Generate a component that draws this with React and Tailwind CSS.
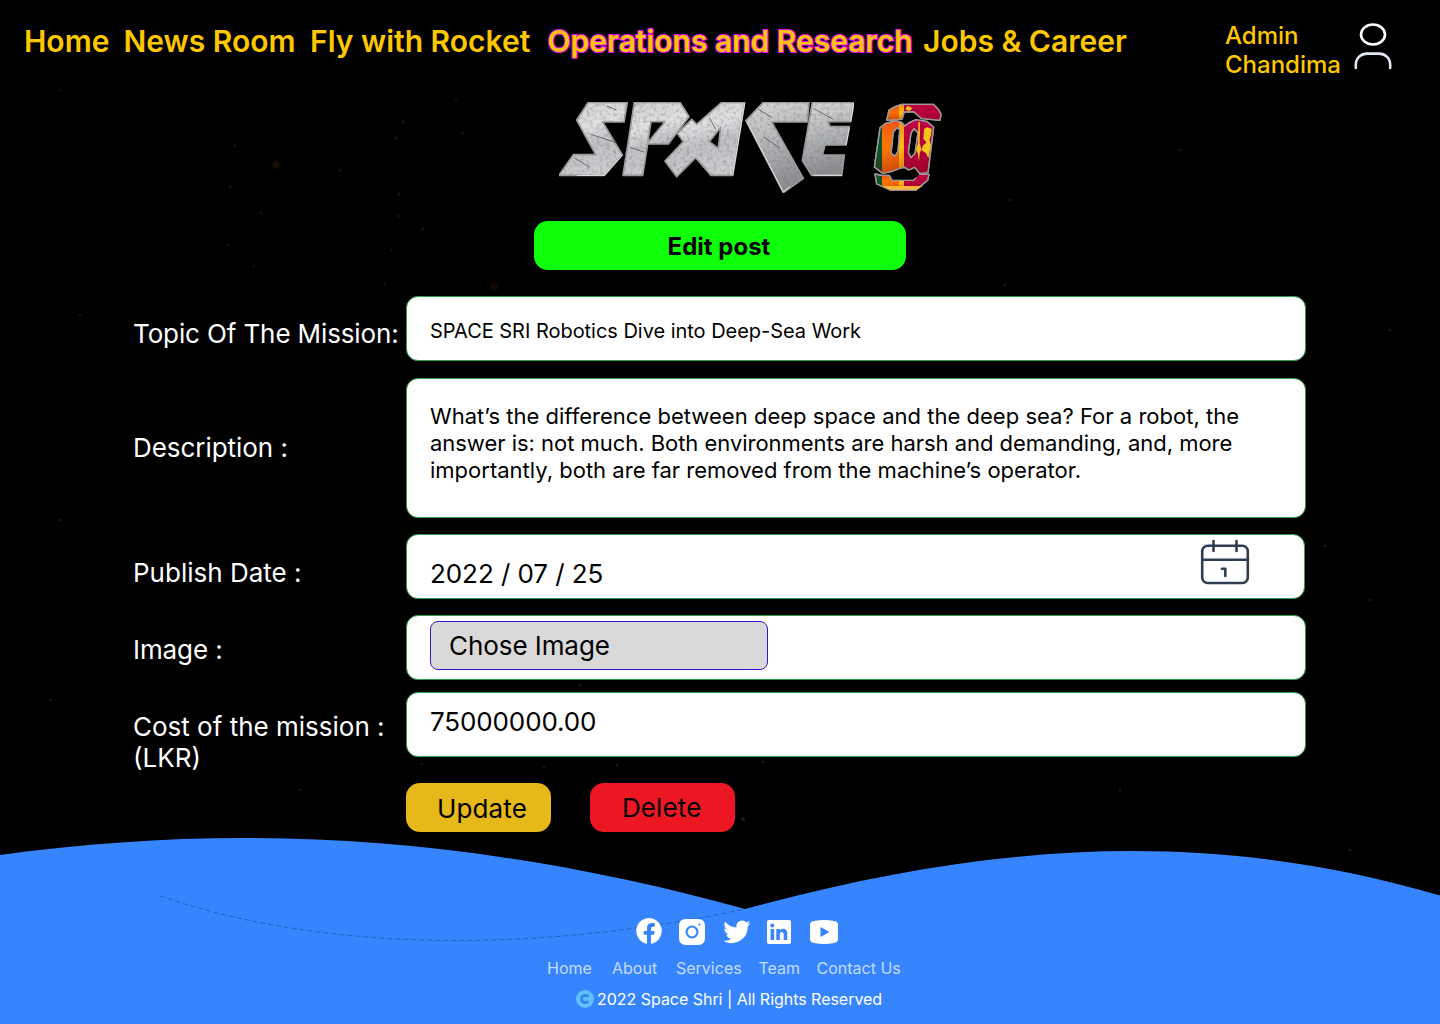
import React from "react";

const NAV = [
  { t: "Home", w: "w-[99.5px]" },
  { t: "News Room", w: "w-[186.5px]" },
  { t: "Fly with Rocket", w: "w-[237.5px]" },
  { t: "Operations and Research", w: "w-[375.5px]", active: true },
  { t: "Jobs & Career", w: "w-[302px]" },
];

const STARS = [
  [276, 165, 4, "#140705"], [276, 165, 2, "#1f100b"], [494, 287, 4, "#140806"], [235, 146, 1.5, "#0c1212"], [456, 99, 1.5, "#0f1414"],
  [403, 122, 1.8, "#14120c"], [396, 138, 1.8, "#14130d"], [463, 133, 1.5, "#121210"], [340, 170, 1.5, "#12120e"], [399, 194, 1.8, "#13130f"],
  [399, 216, 1.5, "#0d1414"], [423, 229, 1.8, "#131313"], [261, 213, 1.5, "#0e1210"], [230, 187, 1.5, "#0f110f"], [254, 266, 1.5, "#0f110f"],
  [208, 256, 1.3, "#14110a"], [228, 245, 1.3, "#101010"], [385, 284, 1.3, "#131010"], [391, 250, 1.3, "#101010"],
  [60, 90, 1.2, "#121212"], [1010, 200, 1.5, "#1a1512"], [80, 315, 1.5, "#181210"], [1005, 285, 1.5, "#191512"],
  [1180, 150, 1.5, "#15110f"], [60, 520, 1.5, "#151515"], [1390, 330, 1.5, "#1a1614"], [1370, 600, 1.5, "#151515"],
  [743, 819, 2, "#1b1f17"], [617, 765, 1.5, "#141c1c"], [422, 764, 1.5, "#121514"], [544, 767, 1.5, "#121514"], [580, 685, 1.5, "#151515"],
  [1120, 790, 1.5, "#161a14"], [300, 790, 1.5, "#131813"], [50, 700, 1.5, "#151515"], [1325, 546, 1.5, "#171717"],
  [763, 762, 1.5, "#151815"], [1350, 850, 1.5, "#151a14"],
];

function Backdrop() {
  return (
    <svg className="absolute inset-0" width="1440" height="1024">
      {STARS.map(([x, y, r, c]) => <circle key={x + "-" + y + "-" + r} cx={x} cy={y} r={r} fill={c} />)}
      <path d="M0 855 C230 824 465 832 745 909 C1000 839.5 1215 829.5 1440 895.5 V1024 H0 Z" fill="#3685ff" />
      <path d="M160 896 C310 948 520 957 745 909" fill="none" stroke="#1b4b96" strokeWidth=".6" strokeDasharray="5 3" />
    </svg>
  );
}

function Logo() {
  return (
    <svg className="block" width="400" height="110" viewBox="0 0 1200 330">
      <defs>
        <linearGradient id="steel" x1="0" y1="0" x2=".25" y2="1">
          <stop offset="0" stopColor="#cfcfcf" /><stop offset=".4" stopColor="#e0e1e3" />
          <stop offset=".65" stopColor="#bfc1c4" /><stop offset="1" stopColor="#cccdd0" />
        </linearGradient>
        <linearGradient id="steelDark" x1="0" y1="0" x2=".2" y2="1">
          <stop offset="0" stopColor="#dadada" /><stop offset=".5" stopColor="#b4b6b9" /><stop offset="1" stopColor="#8b8d91" />
        </linearGradient>
        <linearGradient id="flag" gradientUnits="userSpaceOnUse" x1="970" y1="0" x2="1175" y2="0">
          <stop offset=".12" stopColor="#07572c" />
          <stop offset=".12" stopColor="#ff7a08" /><stop offset=".38" stopColor="#ff6a00" />
          <stop offset=".38" stopColor="#ffc20f" /><stop offset=".45" stopColor="#ffb911" />
          <stop offset=".45" stopColor="#b8003f" />
        </linearGradient>
        <linearGradient id="shade" x1="0" y1="0" x2="0" y2="1">
          <stop offset="0" stopColor="#e80070" stopOpacity=".25" /><stop offset=".5" stopColor="#600" stopOpacity="0" />
          <stop offset="1" stopColor="#700000" stopOpacity=".35" />
        </linearGradient>
        <filter id="grain" x="0" y="0" width="100%" height="100%">
          <feTurbulence type="fractalNoise" baseFrequency=".1" numOctaves="3" seed="4" />
          <feColorMatrix values="0 0 0 0 .2  0 0 0 0 .2  0 0 0 0 .2  1.3 0 0 0 -.57" />
          <feComposite operator="in" in2="SourceGraphic" result="n" />
          <feMerge><feMergeNode in="SourceGraphic" /><feMergeNode in="n" /></feMerge>
        </filter>
      </defs>
      <g filter="url(#grain)" stroke="#a19b9c" strokeWidth="5" strokeLinejoin="round" fillRule="evenodd">
        <path fill="url(#steel)" d="M115 37H232L222 96H158L217 195L163 256H27L70 194H137L80 90Z" />
        <path fill="url(#steel)" d="M253 37H390L417 80L355 162H293L278 256H219ZM303 95H345L293 158Z" />
        <path fill="url(#steel)" d="M440 103L515 37H584L548 256H483L437 203L380 260L345 213L400 155L382 130L425 88ZM512 112L478 155L505 175Z" />
        <path fill="url(#steelDark)" d="M640 37H777L772 96H665L760 265L700 308L588 92Z" />
        <path fill="url(#steelDark)" d="M787 37H912L902 95H835L840 110H898L888 165H825L817 195H883L875 256H785L757 212Z" />
      </g>
      <g fill="none" stroke="#3c3c3e" strokeWidth="2">
        <path d="M122 133L200 158M75 205L120 232M240 172L282 186M478 83L497 118M200 60L170 48M625 58L665 82M790 55L850 88M640 140L690 175" />
      </g>
      <g fill="none" stroke="#e9e6e6" strokeWidth="3" strokeLinejoin="round">
        <path d="M217 195L163 256H80M548 256L584 40M590 94L700 306L720 290M875 256H790M898 112L888 165M902 95L911 40" />
      </g>
      <g stroke="#9d9896" strokeWidth="4" strokeLinejoin="round" fillRule="evenodd">
        {["url(#flag)", "url(#shade)"].map((f) => (
          <g key={f} fill={f}>
            <path d="M1035 50L1055 43H1150L1165 58L1173 72L1170 91L1115 86L1092 66H1063L1056 88L1010 91L1017 60Z" />
            <path d="M1005 101L1035 92L1055 97L1064 108L1078 98L1097 89L1130 94L1151 112L1145 160L1134 248L1110 251L1094 232L1076 240L1064 232L1052 234L1024 245L998 250L973 231L990 113ZM1042 112L1030 126L1023 190L1035 198L1044 185L1049 120ZM1092 116L1083 130L1075 188L1083 203L1095 190L1104 128Z" />
            <path d="M975 252L996 256H1018L1026 271H1092L1102 253L1137 253L1133 271L1098 300H1020L980 282Z" />
          </g>
        ))}
      </g>
      <path fill="#000" d="M1020 252L1052 240L1074 250L1094 240L1108 254L1090 268H1028Z" />
      <path fill="#f5c51c" d="M1105 97H1110L1109 160L1114 178L1109 190L1107 215L1103 190L1098 180L1104 160ZM1072 47L1088 55L1077 64L1066 58ZM1122 118L1130 112L1145 116L1143 136L1138 150L1143 165L1135 205L1128 190L1114 180L1120 165L1130 158L1120 146Z" />
      <path fill="#ffb63a" d="M998 288H1118L1098 299H1020Z" />
    </svg>
  );
}

function UserIcon() {
  return (
    <svg width="40" height="48" viewBox="0 0 40 48" fill="none" strokeWidth="2.6" strokeLinecap="round">
      <ellipse cx="20" cy="12.5" rx="12" ry="10" stroke="#fff" />
      <path d="M2.8 46V43C2.8 36 8 31.6 14 31.6H26C32 31.6 37.2 36 37.2 43V46" stroke="#e2e8f2" />
    </svg>
  );
}

function CalendarIcon() {
  return (
    <svg width="50" height="46" viewBox="0 0 50 46" fill="none" stroke="#2c3e50" strokeWidth="2.6" strokeLinecap="round" strokeLinejoin="round">
      <rect x="2.2" y="6.8" width="45.6" height="37.2" rx="5.5" />
      <path d="M2.2 20.8H48M13.5 2V12M36.5 2V12M22 29.8H25.3V37" />
    </svg>
  );
}

function Field({ label, className, labelClass, children }) {
  return (
    <div className={"flex " + className}>
      <div className={"w-[273px] shrink-0 whitespace-nowrap text-[26px] leading-[31px] text-white " + labelClass}>{label}</div>
      {children}
    </div>
  );
}

const BOX = "w-[900px] rounded-[12px] border border-[#2f9e4f] bg-white pl-[23px] text-black ";

const SOCIAL = [
  { n: "facebook", w: 26, c: "mr-[17px]", d: "M13 0A13 13 0 0 0 11 25.8V16.8H7.7V13H11V10.1C11 6.8 12.9 5 15.9 5C17.3 5 18.8 5.3 18.8 5.3V8.5H17.1C15.5 8.5 15 9.5 15 10.5V13H18.6L18 16.8H15V25.8A13 13 0 0 0 13 0Z" },
  { n: "instagram", w: 26, c: "mr-[18px]", d: "M7 1H19Q26 1 26 8V20Q26 27 19 27H7Q0 27 0 20V8Q0 1 7 1ZM13 7.5A6.5 6.5 0 1 0 13 20.5A6.5 6.5 0 0 0 13 7.5ZM13 9.6A4.4 4.4 0 1 1 13 18.4A4.4 4.4 0 0 1 13 9.6ZM20.5 4.7L21 6L22.3 6.5L21 7L20.5 8.3L20 7L18.7 6.5L20 6Z" },
  { n: "twitter", w: 28, c: "mr-[16px]", d: "M27.5 5.3A11 11 0 0 1 24.3 6.2A5.5 5.5 0 0 0 26.7 3.1A11 11 0 0 1 23.2 4.4A5.65 5.65 0 0 0 13.6 9.5A15.9 15.9 0 0 1 2.1 3.7A5.6 5.6 0 0 0 3.9 11.2A5.5 5.5 0 0 1 1.4 10.5A5.6 5.6 0 0 0 5.9 16.1A5.5 5.5 0 0 1 3.4 16.2A5.6 5.6 0 0 0 8.6 20.7A11.1 11.1 0 0 1 .4 22.7A16 16 0 0 0 24.7 8.2A11 11 0 0 0 27.5 5.3Z" },
  { n: "linkedin", w: 24, c: "mr-[19px]", d: "M2 2H22Q24 2 24 4V24Q24 26 22 26H2Q0 26 0 24V4Q0 2 2 2ZM3.6 11V22H7.1V11ZM5.3 5.6A2 2 0 1 0 5.3 9.6A2 2 0 0 0 5.3 5.6ZM9.3 11V22H12.8V16.5C12.8 13 16.7 13.3 16.7 16.5V22H20.3V15.5C20.3 10 15 9.5 12.8 12.6V11Z" },
  { n: "youtube", w: 28, c: "", d: "M4 3Q14 1.2 24 3Q28 3.3 28 7V21Q28 24.5 24 25Q14 26.8 4 25Q0 24.5 0 21V7Q0 3.3 4 3ZM10.5 9V19L19.5 14Z" },
];

const LINKS = [["Home", "w-[65px]"], ["About", "w-[64px]"], ["Services", "w-[82.5px]"], ["Team", "w-[58px]"], ["Contact Us", "w-[90px]"]];

export default function App() {
  return (
    <div className="relative h-[1024px] w-[1440px] overflow-hidden bg-black font-['Inter',sans-serif]">
      <Backdrop />
      <div className="relative flex flex-col">
        <header className="flex h-[90px] items-start pl-[24px]">
          <nav className="flex pt-[23px] text-[30px] font-semibold leading-[36px] text-[#ffc700]">
            {NAV.map((n) => (
              <a key={n.t} className={"block shrink-0 whitespace-nowrap " + n.w + (n.active ? " [-webkit-text-stroke:2px_#ff00ff] [paint-order:stroke_fill]" : "")}>{n.t}</a>
            ))}
          </nav>
          <div className="w-[128px] shrink-0 pt-[21px] text-[24px] font-medium leading-[29px] text-[#ffc700]">Admin<br />Chandima</div>
          <div className="pt-[22px]"><UserIcon /></div>
        </header>
        <div className="ml-[550px]"><Logo /></div>
        <h1 className="ml-[534px] mt-[21px] h-[49px] w-[372px] rounded-[14px] bg-[#0fff0b] pr-[2px] text-center text-[24px] font-bold leading-[51px] text-black">Edit post</h1>

        <main className="ml-[133px] mt-[26px]">
          <Field label="Topic Of The Mission:" className="h-[65px]" labelClass="pt-[22px] tracking-[-0.12px]">
            <div className={BOX + "pt-[22px] text-[20px] leading-[24px] tracking-[-0.03px]"}>SPACE SRI Robotics Dive into Deep-Sea Work</div>
          </Field>
          <Field label="Description :" className="mt-[17px] h-[140px]" labelClass="pt-[54px] tracking-[-0.05px]">
            <div className={BOX + "pt-[24px] text-[22px] leading-[27px]"}>
              <span className="tracking-[0.02px]">What’s the difference between deep space and the deep sea? For a robot, the</span><br />
              <span className="tracking-[-0.03px]">answer is: not much. Both environments are harsh and demanding, and, more</span><br />
              <span className="tracking-[0.01px]">importantly, both are far removed from the machine’s operator.</span>
            </div>
          </Field>
          <Field label="Publish Date :" className="mt-[16px] h-[65px]" labelClass="pt-[23px]">
            <div className={BOX + "flex max-w-[899px] justify-between pr-[54px] text-[26px] leading-[31px]"}>
              <span className="pt-[23px] tracking-[-0.07px]">2022 / 07 / 25</span>
              <span className="pt-[4px]"><CalendarIcon /></span>
            </div>
          </Field>
          <Field label="Image :" className="mt-[16px] h-[65px]" labelClass="pt-[19px] tracking-[-0.08px]">
            <div className={BOX + "pt-[5px]"}>
              <button className="block h-[49px] w-[338px] rounded-[8px] border border-[#3217d0] bg-[#d9d9d9] pl-[18px] text-left text-[26px] leading-[47px] tracking-[-0.07px]">Chose Image</button>
            </div>
          </Field>
          <Field label={<>Cost of the mission :<br />(LKR)</>} className="mt-[12px] h-[65px]" labelClass="pt-[19px]">
            <div className={BOX + "pt-[13px] text-[26px] leading-[31px] tracking-[-0.12px]"}>75000000.00</div>
          </Field>
          <div className="ml-[273px] mt-[26px] flex gap-[39px] text-[26px] text-black">
            <button className="h-[49px] w-[145px] rounded-[14px] bg-[#e6b81a] pl-[31px] text-left leading-[51px] tracking-[0.12px]">Update</button>
            <button className="h-[49px] w-[145px] rounded-[14px] bg-[#ec1723] pl-[32px] text-left leading-[49px] tracking-[0.1px]">Delete</button>
          </div>
        </main>

        <footer className="mt-[86px]">
          <div className="ml-[636px] flex">
            {SOCIAL.map((s) => (
              <svg key={s.n} className={"block " + s.c} width={s.w} height="28" fill="#fff" fillRule="evenodd"><path d={s.d} /></svg>
            ))}
          </div>
          <div className="ml-[547px] mt-[13px] flex text-[16px] leading-[19px] text-[#c4dbff]">
            {LINKS.map(([t, w]) => <a key={t} className={"block shrink-0 whitespace-nowrap " + w}>{t}</a>)}
          </div>
          <div className="ml-[576px] mt-[12px] flex items-center text-[16px] leading-[19px] text-white">
            <svg className="mr-[3px] block" width="18" height="19" viewBox="0 0 18 19"><circle cx="9" cy="9" r="9" fill="#5fc0ff" /><path d="M12.3 7A3.7 3.7 0 1 0 12.3 11" fill="none" stroke="#3583ee" strokeWidth="2.8" /></svg>
            <span className="whitespace-nowrap tracking-[-0.03px]">2022 Space Shri | All Rights Reserved</span>
          </div>
        </footer>
      </div>
    </div>
  );
}
